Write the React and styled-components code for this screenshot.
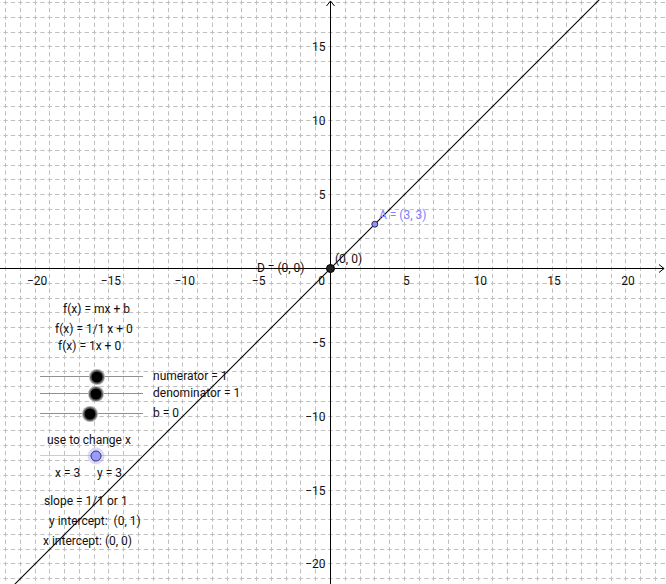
import React from 'react';
import styled, { createGlobalStyle } from 'styled-components';

// graphing view: origin and pixels per unit
const OX = 330.5;
const OY = 268.5;
const U = 14.77;
const W = 666;
const H = 584;
const px = (v) => OX + v * U;
const py = (v) => OY - v * U;
// keep 1px lines crisp
const snap = (v) => Math.round(v - 0.5) + 0.5;

const GlobalStyle = createGlobalStyle`
  html, body {
    margin: 0;
    padding: 0;
    background: #fff;
  }
  body {
    font-family: Roboto, "Liberation Sans", sans-serif;
  }
`;

const Canvas = styled.div`
  position: relative;
  width: ${W}px;
  height: ${H}px;
  overflow: hidden;
  background: #fff;
  font-family: Roboto, "Liberation Sans", sans-serif;
  font-size: 12px;
  color: #111;
`;

const Graph = styled.svg`
  position: absolute;
  left: 0;
  top: 0;
  display: block;
`;

const AxisNumber = styled.text`
  font-family: Roboto, "Liberation Sans", sans-serif;
  font-size: 12px;
  fill: #111;
`;

// a GeoGebra text object, placed at its spot on the drawing pad
const Caption = styled.div`
  position: absolute;
  left: ${(p) => p.$x}px;
  top: ${(p) => p.$y}px;
  transform: translateY(-50%);
  line-height: 1;
  white-space: pre;
  color: ${(p) => p.$color || '#111'};
`;

const Track = styled.div`
  position: absolute;
  left: ${(p) => p.$x}px;
  top: ${(p) => p.$y}px;
  width: ${(p) => p.$w}px;
  height: 1px;
  background: ${(p) => (p.$blue ? '#c4c4ff' : '#909090')};
`;

const Knob = styled.span`
  position: absolute;
  left: ${(p) => p.$pos}px;
  top: 0.5px;
  width: 11px;
  height: 11px;
  border-radius: 50%;
  transform: translate(-50%, -50%);
  background: #000;
  box-shadow: 0 0 0 1.5px #5e5e5e, 0 0 0 2.5px #b4b4b4;
`;

const BlueKnob = styled(Knob)`
  width: 9px;
  height: 9px;
  background: #9999ff;
  border: 1px solid #3a3a5a;
  box-sizing: content-box;
  box-shadow: 0 0 0 3px rgba(150, 150, 255, 0.35);
`;

const sliders = [
  { y: 376, pos: 57, label: 'numerator = 1' },
  { y: 393, pos: 56, label: 'denominator = 1' },
  { y: 413, pos: 50, label: 'b = 0' },
];

const captions = [
  { x: 63, y: 309, text: 'f(x) = mx + b' },
  { x: 55, y: 329, text: 'f(x) = 1/1 x + 0' },
  { x: 58, y: 346, text: 'f(x) = 1x + 0' },
  { x: 47, y: 440, text: 'use to change x' },
  { x: 55, y: 473, text: 'x = 3' },
  { x: 97, y: 473, text: 'y = 3' },
  { x: 44, y: 501, text: 'slope = 1/1 or 1' },
  { x: 49, y: 521, text: 'y intercept:  (0, 1)' },
  { x: 43, y: 541, text: 'x intercept: (0, 0)' },
  { x: 257, y: 268, text: 'D = (0, 0)' },
  { x: 335, y: 259, text: '(0, 0)' },
  { x: 379, y: 215, text: 'A = (3, 3)', color: '#8080ff' },
];

const xTicks = [-20, -15, -10, -5, 5, 10, 15, 20];
const yTicks = [15, 10, 5, -5, -10, -15, -20];

function Grid() {
  const cols = [];
  for (let k = -23; k <= 23; k++) cols.push(k);
  const rows = [];
  for (let k = -22; k <= 19; k++) rows.push(k);
  return (
    <g stroke="#c0c0c0" strokeWidth="1" strokeDasharray="4.4 2.985" strokeDashoffset="2.2">
      {cols.map((k) => (
        <line key={'v' + k} x1={snap(px(k))} y1={py(19)} x2={snap(px(k))} y2={py(-22)} />
      ))}
      {rows.map((k) => (
        <line key={'h' + k} x1={px(-23)} y1={snap(py(k))} x2={px(23)} y2={snap(py(k))} />
      ))}
    </g>
  );
}

function Axes() {
  return (
    <g>
      <g stroke="#000" strokeWidth="1" fill="none">
        <line x1={0} y1={OY} x2={W - 2} y2={OY} />
        <polyline points={`${W - 7},${OY - 4} ${W - 2},${OY} ${W - 7},${OY + 4}`} />
        <line x1={OX} y1={1} x2={OX} y2={H} />
        <polyline points={`${OX - 4},${6} ${OX},${1} ${OX + 4},${6}`} />
      </g>
      {xTicks.map((v) => (
        <AxisNumber key={'x' + v} x={px(v) + 2} y={OY + 16} textAnchor="middle">
          {v < 0 ? '\u2212' + Math.abs(v) : v}
        </AxisNumber>
      ))}
      <AxisNumber x={OX - 9} y={OY + 16} textAnchor="middle">0</AxisNumber>
      {yTicks.map((v) => (
        <AxisNumber key={'y' + v} x={OX - 5} y={py(v) + 4.5} textAnchor="end">
          {v < 0 ? '\u2212' + Math.abs(v) : v}
        </AxisNumber>
      ))}
    </g>
  );
}

export default function App() {
  return (
    <>
      <GlobalStyle />
      <Canvas>
        <Graph width={W} height={H} viewBox={`0 0 ${W} ${H}`}>
          <Grid />
          <Axes />
          <line x1={px(-25)} y1={py(-25)} x2={px(25)} y2={py(25)} stroke="#000" strokeWidth="1.1" />
          <circle cx={px(0)} cy={py(0)} r="4" fill="#222" stroke="#000" strokeWidth="1" />
          <circle cx={px(3)} cy={py(3)} r="3" fill="#9090ff" stroke="#2a2a44" strokeWidth="1" />
        </Graph>

        {captions.map((c) => (
          <Caption key={c.text + c.x} $x={c.x} $y={c.y} $color={c.color}>
            {c.text}
          </Caption>
        ))}

        {sliders.map((s) => (
          <React.Fragment key={s.label}>
            <Track $x={40} $y={s.y} $w={103}>
              <Knob $pos={s.pos} />
            </Track>
            <Caption $x={153} $y={s.y}>{s.label}</Caption>
          </React.Fragment>
        ))}

        <Track $x={40} $y={455} $w={103} $blue>
          <BlueKnob $pos={55.7} />
        </Track>
      </Canvas>
    </>
  );
}
